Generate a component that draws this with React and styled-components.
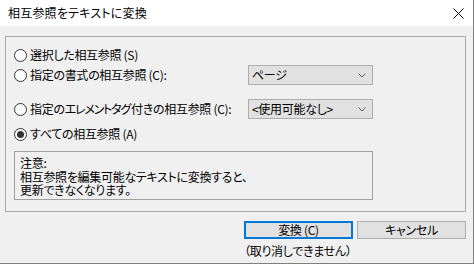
import React from "react";
import styled, { createGlobalStyle } from "styled-components";

const Global = createGlobalStyle`
  html, body { margin: 0; padding: 0; background: #f0f0f0; }
  body {
    font-family: "Noto Sans CJK JP", "Noto Sans", sans-serif;
    font-size: 12px;
    color: #000;
    font-feature-settings: "palt";
    letter-spacing: -0.3px;
  }
  * { box-sizing: border-box; }
`;

const Window = styled.div`
  width: 474px;
  height: 264px;
  display: flex;
  flex-direction: column;
  border-right: 1px solid #808080;
  border-bottom: 1px solid #808080;
  background: #f0f0f0;
  overflow: hidden;
`;

const TitleBar = styled.div`
  height: 26px;
  flex: none;
  background: #fff;
  display: flex;
  align-items: center;
  justify-content: space-between;
  padding-left: 8px;
  padding-right: 9px;
`;

const Title = styled.span`
  font-size: 12px;
  line-height: 16px;
  letter-spacing: 0.2px;
`;

const CloseIcon = () => (
  <svg width="11" height="11" viewBox="0 0 11 11">
    <path d="M0.5 0.5 L10.5 10.5 M10.5 0.5 L0.5 10.5" stroke="#000" strokeWidth="1" fill="none" />
  </svg>
);

const Body = styled.div`
  flex: 1;
  display: flex;
  flex-direction: column;
  padding: 10px 7px 0 5px;
`;

const Group = styled.div`
  border: 1px solid #a9a9a9;
  height: 176px;
  padding: 8px 8px 0 8px;
  display: flex;
  flex-direction: column;
`;

const Row = styled.div`
  display: grid;
  grid-template-columns: 234px 125px;
  align-items: center;
  height: 20px;
  margin-top: ${(p) => p.$mt || 0}px;
`;

const Label = styled.div`
  display: flex;
  align-items: center;
  gap: 3px;
  line-height: 16px;
  white-space: nowrap;
  overflow: hidden;
`;

const Tight = styled.span`
  letter-spacing: -1.2px;
  margin-right: 1px;
`;

const RadioCircle = styled.span`
  width: 13px;
  height: 13px;
  border-radius: 50%;
  border: 1px solid #333;
  background: #fff;
  display: flex;
  align-items: center;
  justify-content: center;
  flex: none;
  &::after {
    content: "";
    width: 7px;
    height: 7px;
    border-radius: 50%;
    background: ${(p) => (p.$checked ? "#333" : "transparent")};
  }
`;

const Combo = styled.div`
  height: 20px;
  border: 1px solid #adadad;
  background: #e1e1e1;
  display: flex;
  align-items: center;
  justify-content: space-between;
  padding: 0 6px 0 3px;
  line-height: 16px;
  white-space: nowrap;
`;

const Chevron = () => (
  <svg width="8" height="5" viewBox="0 0 8 5">
    <polyline points="0.5,0.5 4,4 7.5,0.5" stroke="#606060" strokeWidth="1" fill="none" />
  </svg>
);

const Note = styled.div`
  margin-top: 7px;
  width: 359px;
  height: 49px;
  border: 1px solid #a0a0a0;
  padding: 4px 5px 0 5px;
`;

const NoteTitle = styled.div`
  line-height: 14px;
`;

const NoteText = styled.div`
  line-height: 13px;
`;

const Footer = styled.div`
  display: flex;
  justify-content: flex-end;
  padding-top: 9px;
`;

const FooterCol = styled.div`
  display: flex;
  flex-direction: column;
`;

const Buttons = styled.div`
  display: flex;
  gap: 4px;
`;

const Button = styled.div`
  width: 109px;
  height: 18px;
  background: #e1e1e1;
  border: ${(p) => (p.$default ? "2px solid #0078d7" : "1px solid #adadad")};
  display: flex;
  align-items: center;
  justify-content: center;
  line-height: 14px;
`;

const Hint = styled.div`
  margin-top: 5px;
  line-height: 14px;
`;

export default function App() {
  return (
    <>
      <Global />
      <Window>
        <TitleBar>
          <Title>相互参照をテキストに変換</Title>
          <CloseIcon />
        </TitleBar>
        <Body>
          <Group>
            <Row>
              <Label>
                <RadioCircle />
                <span>選択した相互参照 (S)</span>
              </Label>
            </Row>
            <Row>
              <Label>
                <RadioCircle />
                <span>指定の書式の相互参照 (C):</span>
              </Label>
              <Combo>
                <span>ページ</span>
                <Chevron />
              </Combo>
            </Row>
            <Row $mt={14}>
              <Label>
                <RadioCircle />
                <span>
                  指定の<Tight>エレメントタグ</Tight>付きの相互参照 (C):
                </span>
              </Label>
              <Combo>
                <span>&lt;使用可能なし&gt;</span>
                <Chevron />
              </Combo>
            </Row>
            <Row $mt={5}>
              <Label>
                <RadioCircle $checked />
                <span>すべての相互参照 (A)</span>
              </Label>
            </Row>
            <Note>
              <NoteTitle>注意:</NoteTitle>
              <NoteText>相互参照を編集可能なテキストに変換すると、</NoteText>
              <NoteText>更新できなくなります。</NoteText>
            </Note>
          </Group>
          <Footer>
            <FooterCol>
              <Buttons>
                <Button $default>変換 (C)</Button>
                <Button>キャンセル</Button>
              </Buttons>
              <Hint>（取り消しできません）</Hint>
            </FooterCol>
          </Footer>
        </Body>
      </Window>
    </>
  );
}
